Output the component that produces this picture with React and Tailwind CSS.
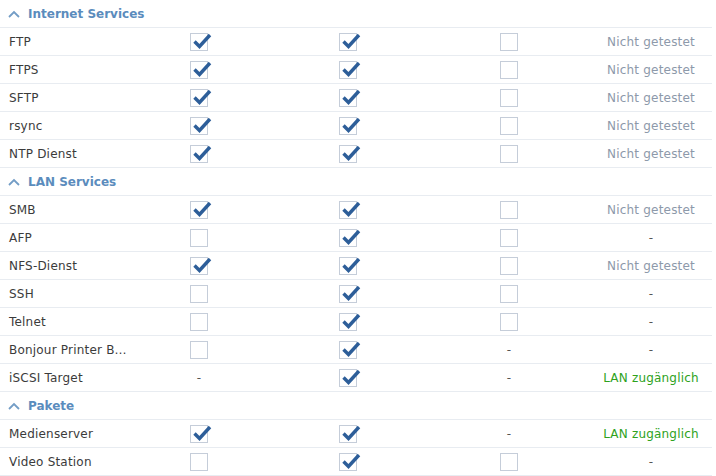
import React from "react";

const sections = [
  {
    title: "Internet Services",
    rows: [
      ["FTP", 1, 1, 0, "nt"],
      ["FTPS", 1, 1, 0, "nt"],
      ["SFTP", 1, 1, 0, "nt"],
      ["rsync", 1, 1, 0, "nt"],
      ["NTP Dienst", 1, 1, 0, "nt"],
    ],
  },
  {
    title: "LAN Services",
    rows: [
      ["SMB", 1, 1, 0, "nt"],
      ["AFP", 0, 1, 0, "-"],
      ["NFS-Dienst", 1, 1, 0, "nt"],
      ["SSH", 0, 1, 0, "-"],
      ["Telnet", 0, 1, 0, "-"],
      ["Bonjour Printer B…", 0, 1, "-", "-"],
      ["iSCSI Target", "-", 1, "-", "lan"],
    ],
  },
  {
    title: "Pakete",
    rows: [
      ["Medienserver", 1, 1, "-", "lan"],
      ["Video Station", 0, 1, 0, "-"],
    ],
  },
];

function Box({ checked }) {
  return (
    <div className="relative w-[18px] h-[18px] border border-[#c5cdd9] bg-white">
      {checked ? (
        <svg
          className="absolute left-[1px] top-[-2px]"
          width="20"
          height="18"
          viewBox="0 0 20 18"
        >
          <path
            d="M2.5 9.5 L7.5 14.5 L18 3"
            fill="none"
            stroke="#2d5e99"
            strokeWidth="3.4"
            strokeLinecap="butt"
            strokeLinejoin="miter"
          />
        </svg>
      ) : null}
    </div>
  );
}

function Cell({ v }) {
  if (v === "-") return <span className="text-[#555] text-[12px]">-</span>;
  return <Box checked={v === 1} />;
}

function Status({ v }) {
  if (v === "nt") return <span className="text-[#8d99aa]">Nicht getestet</span>;
  if (v === "lan") return <span className="text-[#2ea21c]">LAN zugänglich</span>;
  return <span className="text-[#555]">-</span>;
}

export default function App() {
  return (
    <div
      className="w-[716px] h-[476px] bg-white overflow-hidden text-[12px] text-[#3b3b3b] tracking-[0.2px]"
      style={{ fontFamily: '"DejaVu Sans", Verdana, sans-serif' }}
    >
      <div className="w-[712px]">
        {sections.map((s) => (
          <div key={s.title}>
            <div className="h-[28px] border-b border-[#e8ecf1] flex items-center pl-[8px] gap-[8px]">
              <svg width="12" height="8" viewBox="0 0 12 8">
                <path d="M1 7 L6 2 L11 7" fill="none" stroke="#739dc6" strokeWidth="1.8" />
              </svg>
              <span className="font-bold text-[#5b8cbd] text-[12px] tracking-normal">{s.title}</span>
            </div>
            {s.rows.map((r) => (
              <div
                key={r[0]}
                className="h-[28px] border-b border-[#e8ecf1] grid grid-cols-[130px_138px_160px_162px_122px] items-center"
              >
                <div className="pl-[9px] whitespace-nowrap pt-[1px]">{r[0]}</div>
                <div className="flex justify-center">
                  <Cell v={r[1]} />
                </div>
                <div className="flex justify-center">
                  <Cell v={r[2]} />
                </div>
                <div className="flex justify-center">
                  <Cell v={r[3]} />
                </div>
                <div className="flex justify-center whitespace-nowrap pt-[1px]">
                  <Status v={r[4]} />
                </div>
              </div>
            ))}
          </div>
        ))}
      </div>
    </div>
  );
}
